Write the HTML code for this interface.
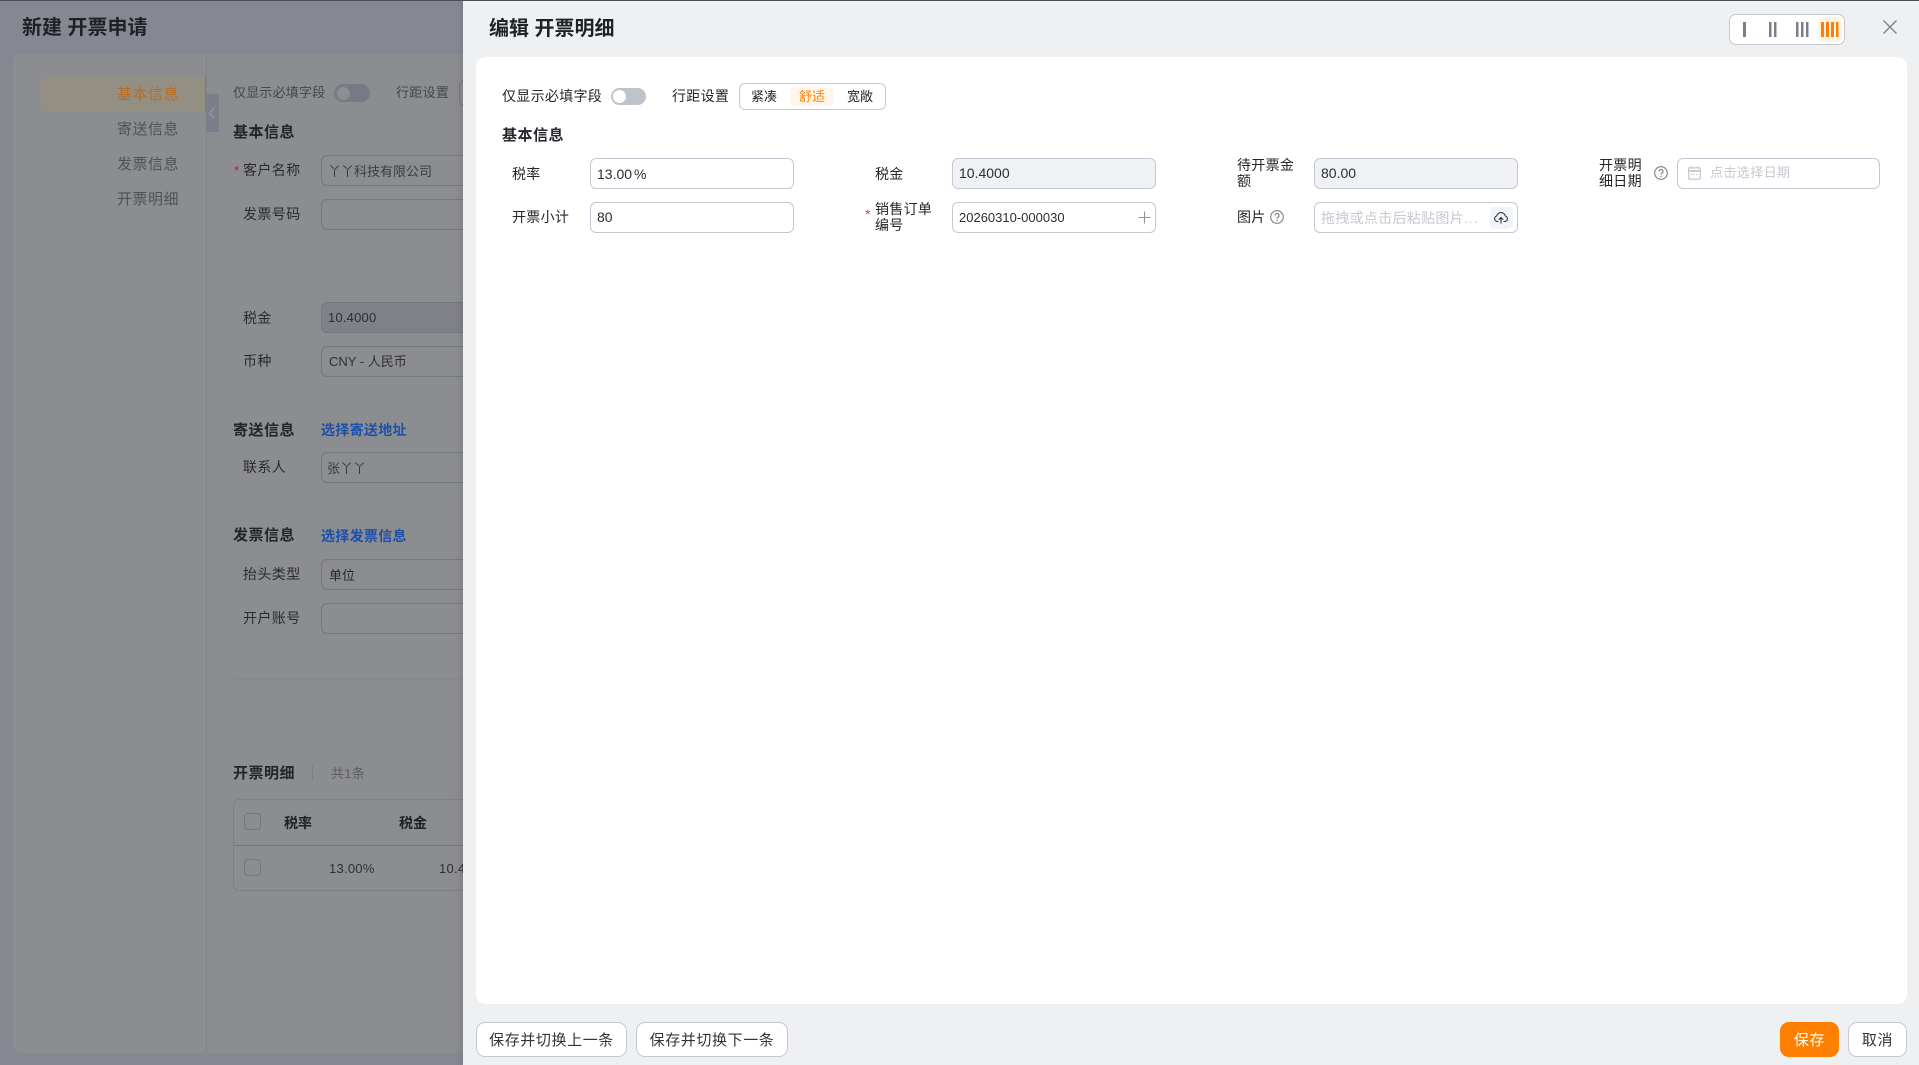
<!DOCTYPE html>
<html lang="zh">
<head>
<meta charset="utf-8">
<title>编辑 开票明细</title>
<style>
html,body{margin:0;padding:0;width:1919px;height:1065px;overflow:hidden;background:#858891;}
body{position:relative;font-family:"Liberation Sans","Noto Sans CJK SC",sans-serif;font-size:14px;color:#24262b;}
.a{position:absolute;white-space:nowrap;}
.t{position:absolute;white-space:nowrap;line-height:20px;height:20px;}
.b{font-weight:700;}
.h{letter-spacing:.5px;}
.l{color:#2a2b2f;font-size:14px;letter-spacing:.4px;}
.inb{position:absolute;box-sizing:border-box;height:31px;border:1px solid #75777e;border-radius:6px;left:321px;width:160px;}
.dis{background:#808186;}
.nav{color:#4f5157;font-size:15px;left:117px;letter-spacing:.5px;}
.in{position:absolute;box-sizing:border-box;width:204px;height:31px;border:1px solid #c5c8d3;border-radius:6px;background:#fff;}
.in.d{background:#f0f1f3;}
.r{color:#24262b;font-size:14px;letter-spacing:.3px;}
.v{color:#2b2d33;font-size:14px;}
.btn{position:absolute;box-sizing:border-box;height:35px;border:1px solid #c5c8d3;border-radius:9px;background:#fff;text-align:center;line-height:35px;font-size:15px;letter-spacing:.6px;color:#33353a;}
.two{position:absolute;white-space:normal;line-height:16px;font-size:14px;letter-spacing:.3px;color:#24262b;}
</style>
</head>
<body>
<!-- background page -->
<div class="a" style="left:0;top:0;width:1919px;height:1px;background:#4c4e53;z-index:5"></div>
<div class="t b" style="left:22px;top:18px;font-size:20px;color:#1f2126">新建 开票申请</div>
<div class="a" style="left:13px;top:54px;width:460px;height:999px;background:#8c8d91;border-radius:8px"></div>
<div class="a" style="left:206px;top:54px;width:1px;height:999px;background:#818287"></div>
<div class="a" style="left:40px;top:77px;width:165px;height:35px;background:#948f83;border-radius:6px 0 0 6px;border-right:1px solid #b96d22"></div>
<div class="a" style="left:206px;top:94px;width:13px;height:38px;background:#7a7f8b"></div>
<svg class="a" style="left:208px;top:106px" width="9" height="14" viewBox="0 0 9 14"><path d="M6.500 1.500 1.500 7l5 5.500" fill="none" stroke="#9a9ca3" stroke-width="1"/></svg>
<div class="t nav" style="top:85px;color:#b96d22">基本信息</div>
<div class="t nav" style="top:120px">寄送信息</div>
<div class="t nav" style="top:155px">发票信息</div>
<div class="t nav" style="top:190px">开票明细</div>

<div class="t" style="left:233px;top:83px;font-size:13px;letter-spacing:.2px;color:#44464b">仅显示必填字段</div>
<div class="a" style="left:334px;top:84px;width:36px;height:18px;border-radius:9px;background:#777a85"></div>
<div class="a" style="left:337px;top:87px;width:13px;height:13px;border-radius:50%;background:#8d8e92"></div>
<div class="t" style="left:396px;top:83px;font-size:13px;letter-spacing:.3px;color:#44464b">行距设置</div>
<div class="a" style="left:459px;top:80px;width:20px;height:26px;box-sizing:border-box;border:1px solid #75777e;border-radius:6px"></div>

<div class="t b h" style="left:233px;top:123px;font-size:15px;color:#222428">基本信息</div>
<div class="t" style="left:234px;top:161px;color:#a8242c;font-size:13px">*</div>
<div class="t l" style="left:243px;top:160px">客户名称</div>
<div class="inb" style="top:155px"></div>
<div class="t" style="left:328px;top:162px;font-size:13px;color:#3a3c42">丫丫科技有限公司</div>
<div class="t l" style="left:243px;top:204px">发票号码</div>
<div class="inb" style="top:199px"></div>
<div class="t l" style="left:243px;top:308px">税金</div>
<div class="inb dis" style="top:302px"></div>
<div class="t" style="left:328px;top:308px;font-size:13px;letter-spacing:.2px;color:#2c2e34">10.4000</div>
<div class="t l" style="left:243px;top:351px">币种</div>
<div class="inb" style="top:346px"></div>
<div class="t" style="left:329px;top:352px;font-size:13px;color:#2f3036">CNY - 人民币</div>

<div class="t b h" style="left:233px;top:421px;font-size:15px;color:#222428">寄送信息</div>
<div class="t" style="left:321px;top:420px;font-size:14px;letter-spacing:.3px;color:#1e50a8;font-weight:700">选择寄送地址</div>
<div class="t l" style="left:243px;top:457px">联系人</div>
<div class="inb" style="top:452px"></div>
<div class="t" style="left:327px;top:459px;font-size:13px;color:#3a3c42">张丫丫</div>

<div class="t b h" style="left:233px;top:526px;font-size:15px;color:#222428">发票信息</div>
<div class="t" style="left:321px;top:526px;font-size:14px;letter-spacing:.3px;color:#1e50a8;font-weight:700">选择发票信息</div>
<div class="t l" style="left:243px;top:564px">抬头类型</div>
<div class="inb" style="top:559px"></div>
<div class="t" style="left:329px;top:566px;font-size:13px;color:#26282d">单位</div>
<div class="t l" style="left:243px;top:608px">开户账号</div>
<div class="inb" style="top:603px"></div>
<div class="a" style="left:233px;top:679px;width:240px;height:1px;background:#87888c"></div>

<div class="t b h" style="left:233px;top:764px;font-size:15px;color:#222428">开票明细</div>
<div class="a" style="left:312px;top:766px;width:1px;height:15px;background:#7d7e83"></div>
<div class="t" style="left:331px;top:764px;font-size:13px;letter-spacing:.3px;color:#5c5e64">共1条</div>
<div class="a" style="left:233px;top:799px;width:260px;height:92px;box-sizing:border-box;border:1px solid #7f8086;border-radius:6px"></div>
<div class="a" style="left:234px;top:845px;width:240px;height:1px;background:#76777d"></div>
<div class="a" style="left:244px;top:813px;width:17px;height:17px;box-sizing:border-box;border:1px solid #75777e;border-radius:4px"></div>
<div class="a" style="left:244px;top:859px;width:17px;height:17px;box-sizing:border-box;border:1px solid #75777e;border-radius:4px"></div>
<div class="t b" style="left:284px;top:813px;font-size:14px;color:#202226">税率</div>
<div class="t b" style="left:399px;top:813px;font-size:14px;color:#202226">税金</div>
<div class="t" style="left:329px;top:859px;font-size:13px;letter-spacing:.25px;color:#2f3036">13.00%</div>
<div class="t" style="left:439px;top:859px;font-size:13px;letter-spacing:.25px;color:#2f3036">10.4000</div>

<!-- drawer -->
<div class="a" style="left:463px;top:1px;width:1456px;height:1064px;background:#eff0f2;box-shadow:-3px 0 6px rgba(0,0,0,.08)"></div>
<div class="t b" style="left:489px;top:19px;font-size:20px;color:#1f2126">编辑 开票明细</div>

<div class="a" style="left:1729px;top:14px;width:116px;height:31px;box-sizing:border-box;background:#fff;border:1px solid #c5c8d3;border-radius:7px"></div>
<div class="a" style="left:1818px;top:17px;width:24px;height:25px;background:#fff4e5;border-radius:5px"></div>
<svg class="a" style="left:1729px;top:14px" width="116" height="31" viewBox="0 0 116 31">
<g fill="#7b7f88"><rect x="14" y="8" width="3" height="15"/><rect x="40" y="8" width="2.500" height="15"/><rect x="45" y="8" width="2.500" height="15"/><rect x="67" y="8" width="2.500" height="15"/><rect x="72" y="8" width="2.500" height="15"/><rect x="77" y="8" width="2.500" height="15"/></g>
<g fill="#ff8000"><rect x="92" y="8" width="3" height="15"/><rect x="97" y="8" width="3" height="15"/><rect x="102" y="8" width="3" height="15"/><rect x="107" y="8" width="2.500" height="15"/></g>
</svg>
<svg class="a" style="left:1882px;top:19px" width="16" height="16" viewBox="0 0 16 16"><path d="M1.500 1.500 14.500 14.500M14.500 1.500 1.500 14.500" fill="none" stroke="#7b7f88" stroke-width="1.300"/></svg>

<div class="a" style="left:476px;top:57px;width:1431px;height:947px;background:#fff;border-radius:10px"></div>

<div class="t" style="left:502px;top:86px;font-size:14px;letter-spacing:.3px;color:#24262b">仅显示必填字段</div>
<div class="a" style="left:611px;top:88px;width:35px;height:17px;border-radius:9px;background:#bfc3cc"></div>
<div class="a" style="left:613px;top:90px;width:13px;height:13px;border-radius:50%;background:#fff"></div>
<div class="t" style="left:672px;top:86px;font-size:14px;letter-spacing:.3px;color:#24262b">行距设置</div>
<div class="a" style="left:739px;top:83px;width:147px;height:27px;box-sizing:border-box;background:#fff;border:1px solid #c5c8d3;border-radius:6px"></div>
<div class="a" style="left:790px;top:87px;width:44px;height:19px;background:#fff5e8;border-radius:5px"></div>
<div class="t" style="left:751px;top:87px;font-size:13px;color:#24262b">紧凑</div>
<div class="t" style="left:799px;top:87px;font-size:13px;color:#ff8000">舒适</div>
<div class="t" style="left:847px;top:87px;font-size:13px;color:#24262b">宽敞</div>

<div class="t b h" style="left:502px;top:126px;font-size:15px;color:#24262b">基本信息</div>

<!-- row 1 -->
<div class="t r" style="left:512px;top:164px">税率</div>
<div class="in" style="left:590px;top:158px"></div>
<div class="t v" style="left:597px;top:164px">13.00<span style="margin-left:2px">%</span></div>

<div class="t r" style="left:875px;top:164px">税金</div>
<div class="in d" style="left:952px;top:158px"></div>
<div class="t v" style="left:959px;top:163px">10.4000</div>

<div class="two" style="left:1237px;top:157px;width:60px">待开票金<br>额</div>
<div class="in d" style="left:1314px;top:158px"></div>
<div class="t v" style="left:1321px;top:163px">80.00</div>

<div class="two" style="left:1599px;top:157px;width:50px">开票明<br>细日期</div>
<svg class="a" style="left:1653px;top:165px" width="16" height="16" viewBox="0 0 16 16"><circle cx="8" cy="8" r="6.300" fill="none" stroke="#7b7f88" stroke-width="1.100"/><path d="M6 6.500a2 2 0 1 1 3 1.700c-.7.400-1 .8-1 1.500" fill="none" stroke="#7b7f88" stroke-width="1.100"/><circle cx="8" cy="11.500" r=".7" fill="#7b7f88"/></svg>
<div class="in" style="left:1677px;top:158px;width:203px"></div>
<svg class="a" style="left:1688px;top:166px" width="13" height="14" viewBox="0 0 13 14"><rect x=".7" y="1.800" width="11.600" height="11.400" rx="1" fill="none" stroke="#c9ccd4" stroke-width="1.300"/><path d="M.7 5h11.600" stroke="#c9ccd4" stroke-width="2"/><path d="M3 .3v2.500M10 .3v2.500" stroke="#c9ccd4" stroke-width="1.300"/><path d="M3 8.500h7" stroke="#c9ccd4" stroke-width="1.200" stroke-dasharray="1.500 1"/></svg>
<div class="t" style="left:1710px;top:163px;font-size:13px;letter-spacing:.4px;color:#c5c8d0">点击选择日期</div>

<!-- row 2 -->
<div class="t r" style="left:512px;top:207px">开票小计</div>
<div class="in" style="left:590px;top:202px"></div>
<div class="t v" style="left:597px;top:207px">80</div>

<div class="t" style="left:865px;top:204px;font-size:14px;color:#f5333f">*</div>
<div class="two" style="left:875px;top:201px;width:62px">销售订单<br>编号</div>
<div class="in" style="left:952px;top:202px"></div>
<div class="t" style="left:959px;top:208px;font-size:13px;color:#2b2d33">20260310-000030</div>
<svg class="a" style="left:1138px;top:211px" width="13" height="13" viewBox="0 0 13 13"><path d="M6.500 .5v12M.5 6.500h12" stroke="#8d919c" stroke-width="1.100" fill="none"/></svg>

<div class="t r" style="left:1237px;top:207px">图片</div>
<svg class="a" style="left:1269px;top:209px" width="16" height="16" viewBox="0 0 16 16"><circle cx="8" cy="8" r="6.300" fill="none" stroke="#7b7f88" stroke-width="1.100"/><path d="M6 6.500a2 2 0 1 1 3 1.700c-.7.400-1 .8-1 1.500" fill="none" stroke="#7b7f88" stroke-width="1.100"/><circle cx="8" cy="11.500" r=".7" fill="#7b7f88"/></svg>
<div class="in" style="left:1314px;top:202px"></div>
<div class="t" style="left:1321px;top:208px;font-size:14px;letter-spacing:.3px;color:#c5c8d0">拖拽或点击后粘贴图片<span style="letter-spacing:1px">...</span></div>
<div class="a" style="left:1490px;top:207px;width:23px;height:22px;background:#f1f4fa;border-radius:5px"></div>
<svg class="a" style="left:1494px;top:211px" width="14" height="13" viewBox="0 0 14 13"><path d="M4.500 10.500H3.500A2.800 2.800 0 0 1 2.700 5 4.400 4.400 0 0 1 11.300 5 2.800 2.800 0 0 1 10.500 10.500H9.500" fill="none" stroke="#33353c" stroke-width="1.100"/><path d="M7 12.500V6.500M4.800 8.700 7 6.500 9.200 8.700" fill="none" stroke="#33353c" stroke-width="1.100"/></svg>

<!-- footer -->
<div class="btn" style="left:476px;top:1022px;width:151px">保存并切换上一条</div>
<div class="btn" style="left:636px;top:1022px;width:152px">保存并切换下一条</div>
<div class="btn" style="left:1780px;top:1022px;width:59px;background:#ff8000;border-color:#ff8000;color:#fff">保存</div>
<div class="btn" style="left:1848px;top:1022px;width:59px">取消</div>
</body>
</html>
